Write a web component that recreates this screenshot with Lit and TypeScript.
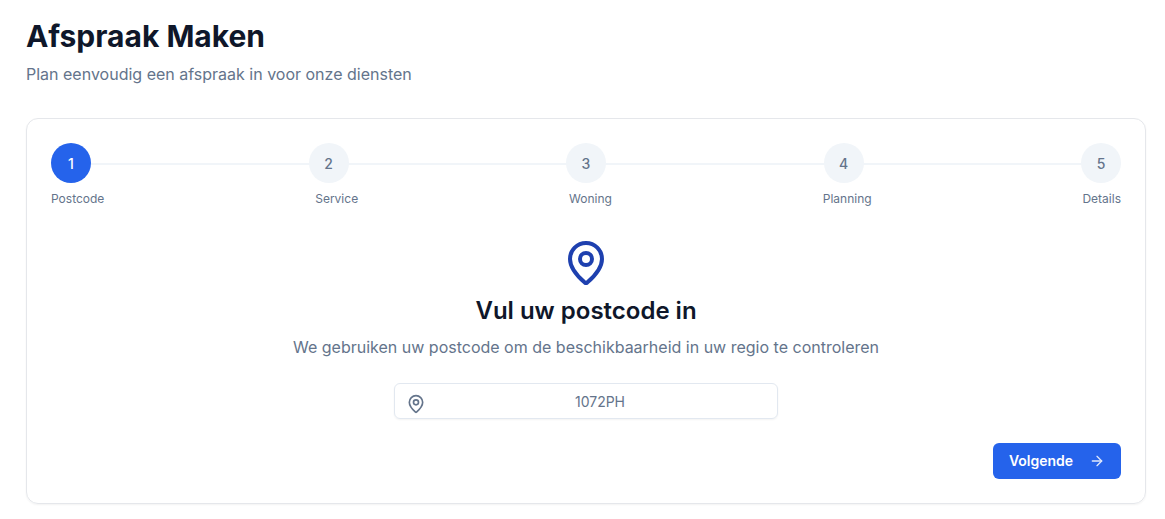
import { LitElement, html, css, svg } from "lit";
import { customElement } from "lit/decorators.js";

const pin = svg`<path d="M20 10c0 4.99-5.54 10.19-7.4 11.8a1 1 0 0 1-1.2 0C9.54 20.19 4 14.99 4 10a8 8 0 0 1 16 0"/><circle cx="12" cy="10" r="3"/>`;

const steps = ["Postcode", "Service", "Woning", "Planning", "Details"];

@customElement("app-root")
export class AppRoot extends LitElement {
  static styles = css`
    :host {
      display: block;
      background: #fff;
      min-height: 519px;
      box-sizing: border-box;
      padding: 16px 19px 0 26px;
      font-family: Inter, "Liberation Sans", sans-serif;
      color: #0f172a;
    }
    h1 {
      margin: 0;
      font-size: 30px;
      line-height: 40px;
      font-weight: 700;
    }
    .sub {
      margin: 6px 0 0;
      font-size: 16px;
      line-height: 24px;
      color: #64748b;
    }
    .card {
      margin-top: 32px;
      box-sizing: border-box;
      height: 386px;
      border: 1px solid #e5e7eb;
      border-radius: 12px;
      padding: 24px;
      box-shadow: 0 1px 2px rgba(0, 0, 0, 0.05);
      display: flex;
      flex-direction: column;
    }
    .track {
      position: relative;
      display: flex;
      justify-content: space-between;
    }
    .track::before {
      content: "";
      position: absolute;
      left: 0;
      right: 0;
      top: 20px;
      height: 2px;
      background: #f1f5f9;
    }
    .dot {
      position: relative;
      width: 40px;
      height: 40px;
      border-radius: 50%;
      background: #f1f5f9;
      color: #64748b;
      font-size: 14px;
      font-weight: 500;
      display: flex;
      align-items: center;
      justify-content: center;
    }
    .dot.active {
      background: #2563eb;
      color: #fff;
    }
    .labels {
      display: flex;
      justify-content: space-between;
      margin-top: 8px;
      font-size: 12px;
      line-height: 16px;
      color: #64748b;
    }
    .body {
      display: flex;
      flex-direction: column;
      align-items: center;
      margin-top: 32px;
    }
    .big {
      width: 48px;
      height: 48px;
      fill: none;
      stroke: #1e40af;
      stroke-width: 2;
      stroke-linecap: round;
      stroke-linejoin: round;
    }
    h2 {
      margin: 8px 0 0;
      font-size: 24px;
      line-height: 32px;
      font-weight: 600;
    }
    .hint {
      margin: 8px 0 0;
      font-size: 16px;
      line-height: 24px;
      color: #64748b;
    }
    .field {
      position: relative;
      margin-top: 24px;
      box-sizing: border-box;
      width: 384px;
      height: 36px;
      border: 1px solid #e2e8f0;
      border-radius: 6px;
      box-shadow: 0 1px 2px rgba(0, 0, 0, 0.05);
      display: flex;
      align-items: center;
      justify-content: center;
      padding-left: 28px;
      font-size: 14px;
      color: #64748b;
    }
    .small {
      position: absolute;
      left: 11px;
      top: 10px;
      width: 20px;
      height: 20px;
      fill: none;
      stroke: #64748b;
      stroke-width: 2;
      stroke-linecap: round;
      stroke-linejoin: round;
    }
    .actions {
      display: flex;
      justify-content: flex-end;
      margin-top: 24px;
    }
    button {
      width: 128px;
      height: 36px;
      border: 0;
      border-radius: 6px;
      background: #2563eb;
      color: #fff;
      font: 600 14px Inter, "Liberation Sans", sans-serif;
      display: flex;
      align-items: center;
      justify-content: center;
      gap: 16px;
      padding: 0;
    }
    button span {
      margin-bottom: 2px;
    }
    button svg {
      width: 16px;
      height: 16px;
      fill: none;
      stroke: currentColor;
      stroke-width: 2;
      stroke-linecap: round;
      stroke-linejoin: round;
      opacity: 0.85;
    }
  `;

  render() {
    return html`
      <h1>Afspraak Maken</h1>
      <p class="sub">Plan eenvoudig een afspraak in voor onze diensten</p>
      <div class="card">
        <div class="track">
          ${steps.map(
            (_, i) => html`<div class="dot ${i === 0 ? "active" : ""}">${i + 1}</div>`,
          )}
        </div>
        <div class="labels">${steps.map((s) => html`<span>${s}</span>`)}</div>
        <div class="body">
          <svg class="big" viewBox="0 0 24 24">${pin}</svg>
          <h2>Vul uw postcode in</h2>
          <p class="hint">We gebruiken uw postcode om de beschikbaarheid in uw regio te controleren</p>
          <div class="field">
            <svg class="small" viewBox="0 0 24 24">${pin}</svg>
            1072PH
          </div>
        </div>
        <div class="actions">
          <button>
            <span>Volgende</span>
            <svg viewBox="0 0 24 24"><path d="M5 12h14"/><path d="m12 5 7 7-7 7"/></svg>
          </button>
        </div>
      </div>
    `;
  }
}
